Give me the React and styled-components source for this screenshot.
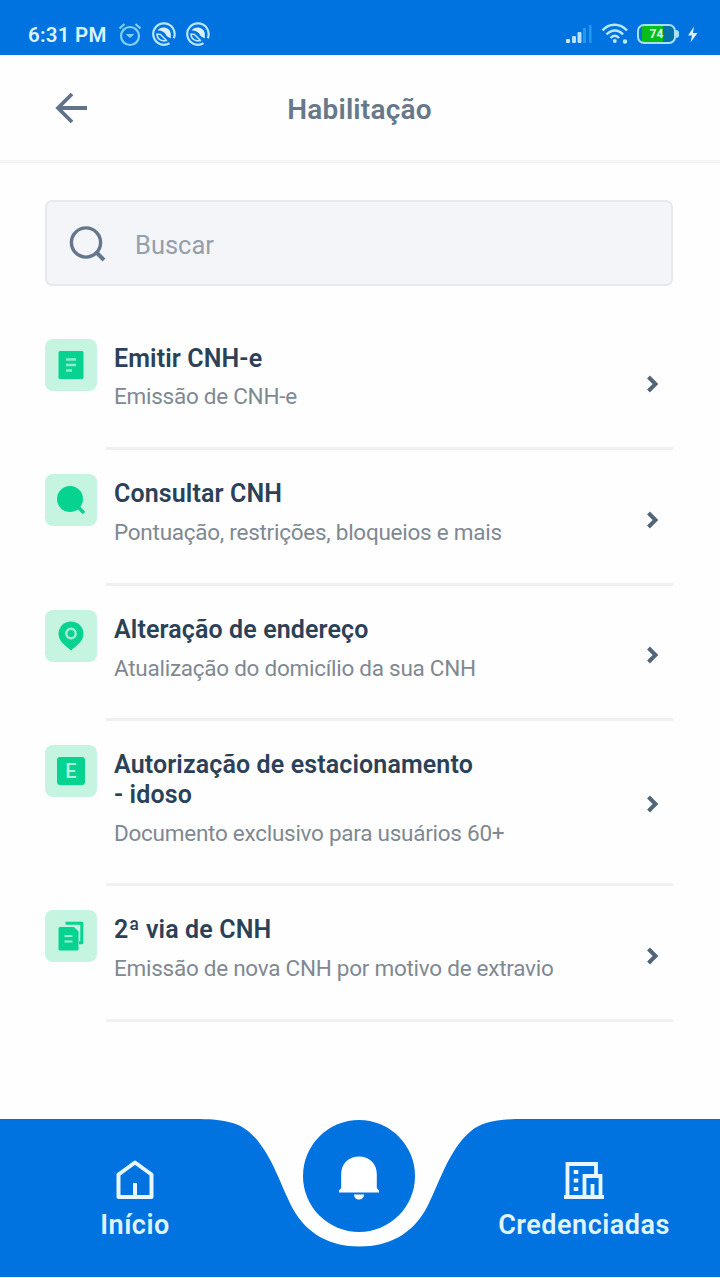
import React from "react";
import styled, { createGlobalStyle } from "styled-components";

const GlobalStyle = createGlobalStyle`
  * {
    box-sizing: border-box;
  }

  body {
    margin: 0;
    background-color: #fefefe;
    font-family: Roboto, "Liberation Sans", sans-serif;
  }
`;

const Screen = styled.div`
  display: flex;
  flex-direction: column;
  width: 720px;
  height: 1278px;
  overflow: hidden;
  background-color: #fefefe;
`;

const StatusBar = styled.div`
  display: flex;
  align-items: center;
  justify-content: space-between;
  height: 55px;
  padding: 13px 22px 0 28px;
  background-color: #0073e0;
  color: #d9f3fc;
`;

const StatusGroup = styled.div`
  display: flex;
  align-items: center;
  gap: ${(props) => props.$gap}px;
`;

const Clock = styled.span`
  width: 80px;
  padding-top: 2px;
  font-size: 20.5px;
  font-weight: 600;
  letter-spacing: 0.25px;
  white-space: nowrap;
`;

const Battery = styled.div`
  display: flex;
  align-items: center;
`;

const BatteryBody = styled.div`
  display: flex;
  align-items: center;
  justify-content: center;
  width: 39px;
  height: 20px;
  border: 2.5px solid #a9e0f4;
  border-radius: 7px;
  background: linear-gradient(to right, #0073e0 3px, #07bd1c 3px, #07bd1c 24px, #0073a8 24px);
  color: #e4ffe4;
  font-size: 12px;
  font-weight: 700;
  line-height: 14px;
`;

const BatteryTip = styled.div`
  width: 3px;
  height: 8px;
  border-radius: 0 3px 3px 0;
  background-color: #a9e0f4;
`;

const Header = styled.header`
  display: grid;
  grid-template-columns: 54px 1fr 54px;
  align-items: center;
  height: 108px;
  padding: 0 46px 0 45px;
  border-bottom: 3px solid #f4f4f5;
`;

const BackButton = styled.button`
  display: flex;
  padding: 0 0 0 9px;
  border: none;
  background: none;
`;

const Title = styled.h1`
  margin: 4px 0 0;
  color: #67788a;
  font-size: 28px;
  font-weight: 600;
  letter-spacing: 0.2px;
  text-align: center;
`;

const SearchBox = styled.div`
  display: flex;
  align-items: center;
  gap: 29px;
  height: 86px;
  margin: 37px 47px 0 45px;
  padding: 0 22px;
  border: 2px solid #e5eaee;
  border-radius: 7px;
  background-color: #f3f5f8;
`;

const SearchText = styled.span`
  margin-top: 3px;
  color: #959faa;
  font-size: 25.5px;
`;

const List = styled.div`
  flex: 1;
  padding: 28.5px 47px 0 45px;
`;

const Row = styled.div`
  display: grid;
  grid-template-columns: 61px 1fr;
  height: ${(props) => (props.$tall ? 165 : 135.6)}px;
`;

const IconTile = styled.div`
  display: flex;
  align-items: center;
  justify-content: center;
  width: 52px;
  height: 52px;
  margin-top: 24px;
  border-radius: 8px;
  background-color: #c5f5e0;
`;

const RowBody = styled.div`
  display: flex;
  justify-content: space-between;
  padding: 0 12px 0 8px;
  border-bottom: 3px solid #f0f0f1;
`;

const RowTexts = styled.div`
  width: 470px;
  padding-top: 29px;
`;

const RowTitle = styled.h2`
  max-width: 370px;
  margin: 0;
  color: #2b4158;
  font-size: 25px;
  font-weight: 600;
  line-height: 29.3px;
  letter-spacing: 0.12px;
`;

const RowSubtitle = styled.p`
  margin: 9.7px 0 0;
  color: #7f8992;
  font-size: 22.5px;
  line-height: 28px;
  letter-spacing: -0.26px;
  white-space: nowrap;
`;

const RowArrow = styled.div`
  padding-top: ${(props) => (props.$tall ? 73.5 : 60.5)}px;
`;

const LetterBadge = styled.span`
  width: 28px;
  height: 28px;
  border-radius: 3px;
  background-color: #07d391;
  color: #b4f4dc;
  font-size: 20px;
  font-weight: 500;
  line-height: 29px;
  text-align: center;
`;

const BottomNav = styled.nav`
  position: relative;
  display: grid;
  grid-template-columns: 270px 178px 272px;
  height: 159px;
`;

const NavShape = styled.svg`
  position: absolute;
  inset: 0;
`;

const NavItem = styled.div`
  position: relative;
  display: flex;
  flex-direction: column;
  align-items: center;
  gap: 9px;
  padding-top: 41px;
`;

const NavLabel = styled.span`
  color: #e0f4ff;
  font-size: 27px;
  font-weight: 600;
  line-height: 32px;
  letter-spacing: 0.5px;
`;

const BellButton = styled.button`
  position: relative;
  display: flex;
  align-items: center;
  justify-content: center;
  justify-self: center;
  width: 112px;
  height: 112px;
  margin-top: 1px;
  padding: 3px 0 0;
  border: none;
  border-radius: 50%;
  background-color: #0073e0;
`;

const AlarmIcon = () => (
  <svg width="24" height="26" viewBox="0 0 24 26" fill="none" stroke="#7fd0f2" strokeWidth="2.2">
    <circle cx="12" cy="15" r="9" />
    <path d="M1.5 7.5L6.5 3M22.5 7.5L17.5 3" />
    <path d="M8.5 13.5H15.5L12 16.5Z" fill="#7fd0f2" strokeWidth="1" />
  </svg>
);

const SyncIcon = () => (
  <svg width="24" height="24" viewBox="0 0 24 24" fill="none">
    <path d="M17.5 21.2A10.7 10.7 0 1 1 21.8 16.2" stroke="#b8e5f8" strokeWidth="2.2" />
    <path d="M5.5 8.5C8.5 3.5 18.5 4.5 18.8 12V16.5L14.5 14C13.5 10.5 10 8.5 5.5 8.5Z" fill="#d5f1fb" />
    <path d="M5 12C5 17 9.5 20 14.5 18.5L8.5 12.5Z" stroke="#b8e5f8" strokeWidth="1.6" strokeLinejoin="round" />
  </svg>
);

const SignalIcon = () => (
  <svg width="27" height="19" viewBox="0 0 27 19">
    <rect x="0" y="14" width="4" height="4" rx="1" fill="#c9ecfa" />
    <rect x="6" y="11" width="4" height="7" rx="1" fill="#b6e1f6" />
    <rect x="11.5" y="7" width="4" height="11" rx="1" fill="#b6e1f6" />
    <rect x="17" y="3" width="3" height="15" fill="#2499e8" />
    <rect x="23" y="0" width="2.5" height="18" fill="#2499e8" />
  </svg>
);

const WifiIcon = () => (
  <svg width="28" height="22" viewBox="0 0 28 22" fill="none" stroke="#b9e8f8" strokeWidth="2.5">
    <path d="M1.5 7.5C8 -0.3 19 -0.3 26 7.5" />
    <path d="M5.5 11.5C10.5 6 17.5 6 22 11.5" />
    <path d="M9.5 15C12 12 15.5 12 18 15" />
    <circle cx="13.8" cy="18" r="1.2" fill="#b9e8f8" strokeWidth="1.5" />
    <circle cx="24" cy="18.5" r="1.5" fill="#b9e8f8" strokeWidth="1.5" />
  </svg>
);

const BoltIcon = () => (
  <svg width="11" height="17" viewBox="0 0 11 17" fill="#d5f2fc">
    <path d="M7 0.5L1 9.5H5L3.5 16.5L10.5 7H6Z" />
  </svg>
);

const BackIcon = () => (
  <svg width="34" height="32" viewBox="0 0 34 32" fill="none" stroke="#60738a" strokeWidth="3.8">
    <path d="M33 16H4M18 2L4 16L18 30" />
  </svg>
);

const SearchIcon = () => (
  <svg width="37" height="37" viewBox="0 0 37 37" fill="none" stroke="#65778b" strokeWidth="3.4">
    <circle cx="17" cy="17.5" r="14.6" />
    <path d="M26.5 26.5L35 35" strokeWidth="4" />
  </svg>
);

const DocumentIcon = () => (
  <svg width="26" height="28" viewBox="0 0 26 28">
    <rect x="0.5" width="25" height="28" rx="1.5" fill="#07d391" />
    <path d="M8 8.5H18M8 14H18M8 19.5H14" stroke="#8eebcb" strokeWidth="2.4" />
  </svg>
);

const LensIcon = () => (
  <svg width="30" height="30" viewBox="0 0 30 30">
    <circle cx="14" cy="14" r="13" fill="#07d391" />
    <path d="M21 21L28 28" stroke="#07d391" strokeWidth="3.5" />
  </svg>
);

const PinIcon = () => (
  <svg width="26" height="30" viewBox="0 0 26 30">
    <path d="M13 0.5C6 0.5 0.5 6 0.5 12.8C0.5 20 7 24.5 13 29.5C19 24.5 25.5 20 25.5 12.8C25.5 6 20 0.5 13 0.5Z" fill="#07d391" />
    <circle cx="13" cy="12.5" r="4.7" fill="none" stroke="#a5f0d7" strokeWidth="2.4" />
  </svg>
);

const CopyIcon = () => (
  <svg width="26" height="30" viewBox="0 0 26 30">
    <path d="M7.5 2.2H23.8V21.8H21" fill="none" stroke="#07d391" strokeWidth="3" strokeLinejoin="round" />
    <path d="M2 6H16L20.5 10.5V28Q20.5 29.5 19 29.5H2Q0.5 29.5 0.5 28V7.5Q0.5 6 2 6Z" fill="#07d391" />
    <path d="M6.5 15H14.5M6.5 20.5H14.5" stroke="#9cefd2" strokeWidth="2.2" />
  </svg>
);

const ChevronIcon = () => (
  <svg width="16" height="18" viewBox="0 0 16 18" fill="none" stroke="#536579" strokeWidth="4">
    <path d="M3.5 2L10.5 9L3.5 16" />
  </svg>
);

const HomeIcon = () => (
  <svg width="38" height="40" viewBox="0 0 38 40" fill="none" stroke="#e8f7ff" strokeWidth="4">
    <path d="M2.5 14.5L19 2.5L35.5 14.5V37H2.5ZM19 37V23" strokeLinejoin="round" />
  </svg>
);

const BuildingIcon = () => (
  <svg width="40" height="40" viewBox="0 0 40 40" fill="none" stroke="#e8f7ff" strokeWidth="3.8">
    <path d="M0 37H40M3.5 37V4H32V16M20.5 37V16H36.5V37M28.5 37V24" />
    <path d="M12 10V14M12 18.5V22.5M12 27V31" strokeWidth="4.6" />
  </svg>
);

const BellIcon = () => (
  <svg width="42" height="44" viewBox="0 0 42 44" fill="#fff">
    <path d="M1 36.5V34.5L3.2 32V18C3.2 7.5 11 0.5 21 0.5S38.8 7.5 38.8 18V32L41 34.5V36.5Z" />
    <path d="M16 38.5H26C26 41.5 23.5 43.5 21 43.5S16 41.5 16 38.5Z" />
  </svg>
);

const services = [
  { title: "Emitir CNH-e", subtitle: "Emissão de CNH-e", icon: <DocumentIcon /> },
  { title: "Consultar CNH", subtitle: "Pontuação, restrições, bloqueios e mais", icon: <LensIcon /> },
  { title: "Alteração de endereço", subtitle: "Atualização do domicílio da sua CNH", icon: <PinIcon /> },
  {
    title: "Autorização de estacionamento - idoso",
    subtitle: "Documento exclusivo para usuários 60+",
    icon: <LetterBadge>E</LetterBadge>,
    tall: true,
  },
  { title: "2ª via de CNH", subtitle: "Emissão de nova CNH por motivo de extravio", icon: <CopyIcon /> },
];

function App() {
  return (
    <Screen>
      <GlobalStyle />
      <StatusBar>
        <StatusGroup $gap={10}>
          <Clock>6:31 PM</Clock>
          <AlarmIcon />
          <SyncIcon />
          <SyncIcon />
        </StatusGroup>
        <StatusGroup $gap={8}>
          <SignalIcon />
          <WifiIcon />
          <Battery>
            <BatteryBody>74</BatteryBody>
            <BatteryTip />
          </Battery>
          <BoltIcon />
        </StatusGroup>
      </StatusBar>

      <Header>
        <BackButton aria-label="Voltar">
          <BackIcon />
        </BackButton>
        <Title>Habilitação</Title>
      </Header>

      <SearchBox>
        <SearchIcon />
        <SearchText>Buscar</SearchText>
      </SearchBox>

      <List>
        {services.map((service) => (
          <Row key={service.title} $tall={service.tall}>
            <IconTile>{service.icon}</IconTile>
            <RowBody>
              <RowTexts>
                <RowTitle>{service.title}</RowTitle>
                <RowSubtitle>{service.subtitle}</RowSubtitle>
              </RowTexts>
              <RowArrow $tall={service.tall}>
                <ChevronIcon />
              </RowArrow>
            </RowBody>
          </Row>
        ))}
      </List>

      <BottomNav>
        <NavShape width="720" height="159" viewBox="0 0 720 159">
          <path
            d="M0 0H195C222 0 237 3 248 12C271 31 280 66 293 90C307 115 330 127.5 359.5 127.5C389 127.5 412 115 426 90C439 66 448 31 471 12C482 3 497 0 524 0H720V158H0Z"
            fill="#0073e0"
          />
        </NavShape>
        <NavItem>
          <HomeIcon />
          <NavLabel>Início</NavLabel>
        </NavItem>
        <BellButton aria-label="Notificações">
          <BellIcon />
        </BellButton>
        <NavItem>
          <BuildingIcon />
          <NavLabel>Credenciadas</NavLabel>
        </NavItem>
      </BottomNav>
    </Screen>
  );
}

export default App;
